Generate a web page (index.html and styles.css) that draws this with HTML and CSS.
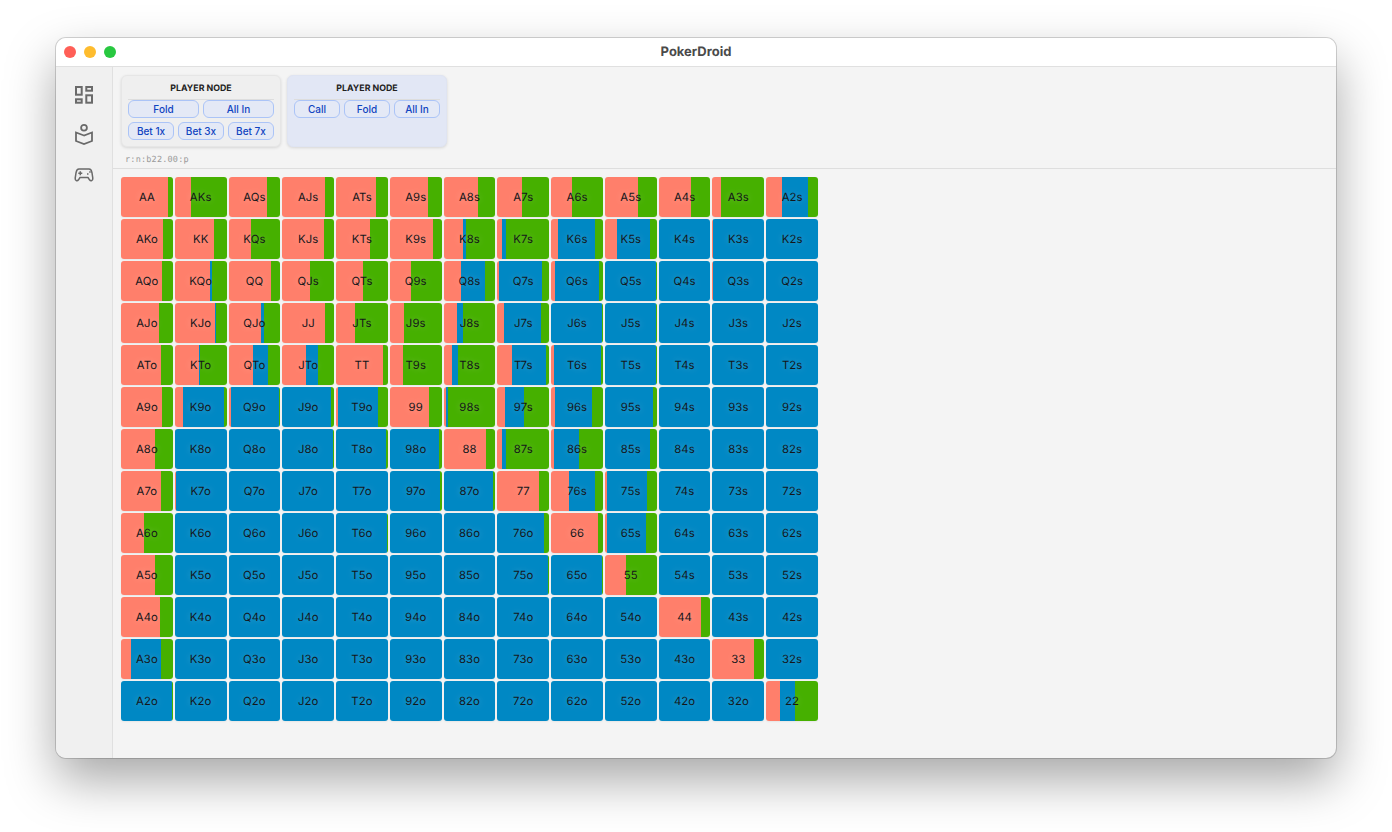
FILE: index.html
```html
<!DOCTYPE html>
<html lang="en">
<head>
    <meta charset="UTF-8">
    <title>PokerDroid</title>
    <meta name="viewport" content="width=device-width, initial-scale=1.0">
    <link rel="stylesheet" href="styles.css">
</head>
<body>
<div class="window">
    <div class="titlebar">
        <div class="lights">
            <span class="light red"></span>
            <span class="light yellow"></span>
            <span class="light green"></span>
        </div>
        <div class="title">PokerDroid</div>
    </div>

    <div class="main">
        <div class="sidebar">
            <svg class="nav-icon" viewBox="0 0 24 24" fill="none" stroke="currentColor" stroke-width="2">
                <rect x="4" y="4" width="5.7" height="7.7"/>
                <rect x="4" y="16.3" width="5.7" height="3.4"/>
                <rect x="14.3" y="4" width="5.7" height="3.7"/>
                <rect x="14.3" y="12.3" width="5.7" height="7.4"/>
            </svg>
            <svg class="nav-icon" viewBox="0 0 24 24" fill="none" stroke="currentColor" stroke-width="1.8">
                <circle cx="12" cy="4.7" r="2.9"/>
                <path d="M12 12.5 L4 9.5 V18 L12 21 L20 18 V9.5 Z"/>
            </svg>
            <svg class="nav-icon" viewBox="0 0 24 24" fill="none" stroke="currentColor" stroke-width="1.5" stroke-linejoin="round">
                <path d="M7 6 H17 C18.8 6 19.6 7.6 20 9.8 L20.8 15.2 C21 17.8 18.8 18.6 17.5 16.8 L16 14.5 H8 L6.5 16.8 C5.2 18.6 3 17.8 3.2 15.2 L4 9.8 C4.4 7.6 5.2 6 7 6 Z"/>
                <path d="M6.3 10.3 H10.3 M8.3 8.3 V12.3"/>
                <path d="M15 11 h1.5 M17.2 9 h1.5"/>
            </svg>
        </div>

        <div class="content">
            <div class="toolbar">
                <div class="nodes">
                    <div class="node">
                        <div class="node-title">PLAYER NODE</div>
                        <div class="actions two">
                            <button>Fold</button>
                            <button>All In</button>
                        </div>
                        <div class="actions three">
                            <button>Bet 1x</button>
                            <button>Bet 3x</button>
                            <button>Bet 7x</button>
                        </div>
                    </div>
                    <div class="node active">
                        <div class="node-title">PLAYER NODE</div>
                        <div class="actions three">
                            <button>Call</button>
                            <button>Fold</button>
                            <button>All In</button>
                        </div>
                    </div>
                </div>
                <div class="path">r:n:b22.00:p</div>
            </div>

            <div class="range" id="range"></div>
        </div>
    </div>
</div>

<script src="script.js"></script>
</body>
</html>
```
FILE: styles.css
```css
* { box-sizing: border-box; }
html, body { margin: 0; height: 832px; overflow: hidden; }
body { padding: 38px 56px 0; background: #fff; font-family: Inter, "Noto Sans", sans-serif; color: #1a1a1a; text-rendering: geometricPrecision; }

.window { height: 720px; border-radius: 10px; overflow: hidden; background: #f4f4f4; display: flex; flex-direction: column; box-shadow: 0 0 0 1px rgba(0,0,0,0.16), 0 22px 50px rgba(0,0,0,0.35); }

.titlebar { height: 29px; flex: none; background: #fff; border-bottom: 1px solid #e0e0e0; display: flex; align-items: center; justify-content: center; position: relative; }
.title { font-size: 13px; font-weight: 700; color: #4a4a4a; }
.lights { position: absolute; left: 8px; top: 8px; display: flex; gap: 8px; }
.light { width: 12px; height: 12px; border-radius: 50%; }
.light.red { background: #ff5f57; }
.light.yellow { background: #febc2e; }
.light.green { background: #28c840; }

.main { flex: 1; display: flex; min-height: 0; }
.sidebar { width: 57px; flex: none; background: #f0f0f0; border-right: 1px solid #e0e0e0; display: flex; flex-direction: column; align-items: center; padding-top: 16px; gap: 16px; }
.nav-icon { width: 24px; height: 24px; color: #6a6a6a; }

.content { flex: 1; min-width: 0; }
.toolbar { height: 102px; padding: 8px 8px 0; border-bottom: 1px solid #dedede; }
.nodes { display: flex; gap: 6px; }
.node { width: 160px; height: 72px; padding: 5px 6px 6px; background: #efefef; border: 1px solid #e6e6e6; border-radius: 6px; box-shadow: 0 1px 3px rgba(0,0,0,0.12); display: flex; flex-direction: column; gap: 4px; }
.node.active { background: #e2e7f5; border-color: #dfe4f2; }
.node-title { font-size: 8.8px; font-weight: 700; line-height: 16px; height: 19px; margin-bottom: -4px; text-align: center; border-bottom: 1px solid #dddddd; color: #222; }
.actions { display: grid; gap: 4px; }
.actions.two { grid-template-columns: 1fr 1fr; }
.actions.three { grid-template-columns: 1fr 1fr 1fr; }
button { height: 18px; padding: 0; font-family: inherit; font-size: 10px; font-weight: 500; color: #1044c0; background: #e4e9f6; border: 1px solid #abc4f7; border-radius: 6px; }
.path { margin-top: 8px; font-family: "DejaVu Sans Mono", monospace; font-size: 8.5px; line-height: 11px; letter-spacing: 0.2px; color: #9a9a9a; padding-left: 4px; }

.range { padding: 8px; width: 713px; display: grid; grid-template-columns: repeat(13, 1fr); grid-auto-rows: 40px; gap: 2px; }
.cell { position: relative; border-radius: 3px; overflow: hidden; display: flex; box-shadow: 0 1px 2px rgba(0,0,0,0.06); }
.seg { height: 100%; }
.seg.raise { background: #ff7f6b; }
.seg.call { background: #0088c4; }
.seg.fold { background: #46b000; }
.hand { position: absolute; inset: 0; display: flex; align-items: center; justify-content: center; font-size: 11.3px; letter-spacing: 0.1px; color: #14161a; text-shadow: 0 0 7px rgba(255,255,255,0.28); }
```
FILE: script.js
```js
// hands in grid order, upper right is suited
const ranks = "AKQJT98765432";

// each entry is raise,call in percent. the rest of the cell is fold (green)
const mix = [
    ["90", "31", "75", "83", "77", "73", "66", "48", "40", "63", "63", "17", "31,50"],
    ["81", "75", "43", "81", "65", "84", "37,6", "8,8", "13,71", "24,63", "1,99", "1,98", "0,100"],
    ["79", "69,2", "82", "54", "52", "41", "33,47", "4,83", "8,85", "0,99", "1,99", "2,97", "0,100"],
    ["73", "78,2", "63,6", "83", "37", "27", "25,12", "13,71", "0,98", "0,99", "0,100", "0,100", "0,100"],
    ["77", "47,2", "47,29", "46,23", "90", "25", "16,12", "29,65", "6,90", "0,99", "0,100", "0,100", "0,100"],
    ["79", "16,80", "4,94", "0,94", "4,77", "76", "4,4", "15,37", "8,71", "0,92", "0,100", "0,100", "0,100"],
    ["65", "1,99", "0,100", "0,98", "0,96", "0,94", "82", "8,8", "6,48", "0,88", "0,100", "0,100", "0,100"],
    ["77", "2,98", "0,100", "0,100", "0,100", "0,96", "0,96", "81", "35,50", "4,78", "0,100", "0,100", "0,100"],
    ["44", "0,100", "0,100", "0,100", "0,98", "0,100", "0,100", "0,90", "90", "4,76", "0,100", "0,100", "0,100"],
    ["65", "0,100", "0,100", "0,100", "0,100", "0,100", "0,100", "0,98", "0,98", "41", "1,98", "0,99", "0,100"],
    ["75", "0,100", "0,100", "0,100", "0,100", "0,100", "0,100", "0,100", "0,100", "0,100", "82", "0,100", "0,100"],
    ["19,58", "0,100", "0,100", "0,100", "0,100", "0,100", "0,100", "0,100", "0,100", "0,100", "0,100", "81", "0,100"],
    ["0,99", "0,100", "0,100", "0,100", "0,100", "0,100", "0,100", "0,100", "0,100", "0,100", "0,100", "0,100", "27,29"]
];

function handName(row, col) {
    if (row === col) return ranks[row] + ranks[col];
    if (col > row) return ranks[row] + ranks[col] + "s";
    return ranks[col] + ranks[row] + "o";
}

function addSeg(cell, cls, pct) {
    if (pct <= 0) return;
    const seg = document.createElement("div");
    seg.className = "seg " + cls;
    seg.style.width = pct + "%";
    cell.appendChild(seg);
}

const range = document.getElementById("range");

mix.forEach((line, row) => {
    line.forEach((val, col) => {
        const parts = val.split(",").map(Number);
        const raise = parts[0];
        const call = parts[1] || 0;

        const cell = document.createElement("div");
        cell.className = "cell";
        addSeg(cell, "raise", raise);
        addSeg(cell, "call", call);
        addSeg(cell, "fold", 100 - raise - call);

        const hand = document.createElement("div");
        hand.className = "hand";
        hand.textContent = handName(row, col);
        cell.appendChild(hand);

        range.appendChild(cell);
    });
});
```
